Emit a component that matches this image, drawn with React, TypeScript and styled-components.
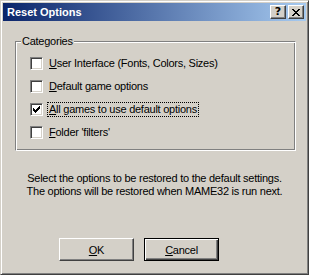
import React from 'react';
import styled, { createGlobalStyle } from 'styled-components';

const Global = createGlobalStyle`
  html, body {
    margin: 0;
    padding: 0;
    background: #d4d0c8;
  }
  body {
    font-family: "Liberation Sans", Arial, sans-serif;
    font-size: 11px;
    letter-spacing: -0.25px;
    color: #000;
  }
`;

// 窗口外框
const Window = styled.div`
  width: 309px;
  height: 275px;
  box-sizing: border-box;
  background: #d4d0c8;
  border: 1px solid;
  border-color: #d4d0c8 #404040 #404040 #d4d0c8;
  box-shadow: inset 1px 1px #fff, inset -1px -1px #808080;
  padding: 2px;
  display: flex;
  flex-direction: column;
`;

const TitleBar = styled.div`
  height: 18px;
  display: flex;
  align-items: center;
  padding: 0 2px;
  background: linear-gradient(to right, #0a246a, #a6caf0);
  color: #fff;
  font-weight: bold;
  font-size: 11px;
  letter-spacing: 0;
`;

const TitleText = styled.span`
  flex: 1;
  padding-left: 2px;
`;

const CaptionGroup = styled.div`
  display: flex;
  gap: 2px;
`;

const CaptionButton = styled.div`
  width: 16px;
  height: 14px;
  box-sizing: border-box;
  background: #d4d0c8;
  border: 1px solid;
  border-color: #fff #404040 #404040 #fff;
  box-shadow: inset -1px -1px #808080;
  display: flex;
  align-items: center;
  justify-content: center;
  color: #000;
  font-family: "DejaVu Sans", sans-serif;
  font-weight: bold;
  font-size: 11px;
  line-height: 12px;
`;

const Content = styled.div`
  flex: 1;
  display: flex;
  flex-direction: column;
  padding-top: 20px;
`;

// 分组框
const Group = styled.div`
  position: relative;
  width: 281px;
  height: 110px;
  box-sizing: border-box;
  margin-left: 12px;
  border: 1px solid;
  border-color: #808080 #fff #fff #808080;
  box-shadow: inset 1px 1px #fff, inset -1px -1px #808080;
  padding: 10px 0 0 14px;
`;

const Legend = styled.span`
  position: absolute;
  top: -8px;
  left: 5px;
  padding: 0 1px;
  background: #d4d0c8;
  line-height: 14px;
`;

const Row = styled.div`
  display: flex;
  align-items: center;
  height: 23px;
`;

const Box = styled.div`
  width: 13px;
  height: 13px;
  box-sizing: border-box;
  background: #fff;
  border: 1px solid;
  border-color: #808080 #fff #fff #808080;
  box-shadow: inset 1px 1px #404040, inset -1px -1px #d4d0c8;
  padding: 2px;
  margin-right: 4px;
  flex-shrink: 0;
`;

const Label = styled.span<{ $focus?: boolean }>`
  line-height: 13px;
  padding: 0 1px;
  border: 1px dotted ${(p) => (p.$focus ? '#000' : 'transparent')};
  white-space: nowrap;
`;

const Key = styled.span`
  text-decoration: underline;
`;

const Message = styled.div`
  margin-top: 21px;
  text-align: center;
  line-height: 13px;
`;

const ButtonRow = styled.div`
  display: flex;
  gap: 10px;
  margin-top: 40px;
  padding-left: 56px;
`;

const Button = styled.div<{ $default?: boolean }>`
  width: 75px;
  height: 23px;
  box-sizing: border-box;
  background: #d4d0c8;
  display: flex;
  align-items: center;
  justify-content: center;
  border: 1px solid;
  border-color: ${(p) => (p.$default ? '#000' : '#fff #404040 #404040 #fff')};
  box-shadow: ${(p) =>
    p.$default
      ? 'inset 1px 1px #fff, inset -1px -1px #404040, inset -2px -2px #808080'
      : 'inset -1px -1px #808080'};
`;

const Check = () => (
  <svg width="7" height="7" viewBox="0 0 7 7" shapeRendering="crispEdges" style={{ display: 'block' }}>
    <rect x="6" y="0" width="1" height="3" fill="#000" />
    <rect x="5" y="1" width="1" height="3" fill="#000" />
    <rect x="4" y="2" width="1" height="3" fill="#000" />
    <rect x="3" y="3" width="1" height="3" fill="#000" />
    <rect x="2" y="4" width="1" height="3" fill="#000" />
    <rect x="1" y="3" width="1" height="3" fill="#000" />
    <rect x="0" y="2" width="1" height="3" fill="#000" />
  </svg>
);

const CloseIcon = () => (
  <svg width="8" height="7" viewBox="0 0 8 7" shapeRendering="crispEdges" style={{ display: 'block' }}>
    <path d="M0 0h2v1H0zM6 0h2v1H6zM1 1h2v1H1zM5 1h2v1H5zM2 2h4v1H2zM3 3h2v1H3zM2 4h4v1H2zM1 5h2v1H1zM5 5h2v1H5zM0 6h2v1H0zM6 6h2v1H6z" fill="#000" />
  </svg>
);

const options = [
  { key: 'U', rest: 'ser Interface (Fonts, Colors, Sizes)', checked: false },
  { key: 'D', rest: 'efault game options', checked: false },
  { key: 'A', rest: 'll games to use default options', checked: true },
  { key: 'F', rest: "older 'filters'", checked: false },
];

function App() {
  return (
    <>
      <Global />
      <Window>
        <TitleBar>
          <TitleText>Reset Options</TitleText>
          <CaptionGroup>
            <CaptionButton>?</CaptionButton>
            <CaptionButton>
              <CloseIcon />
            </CaptionButton>
          </CaptionGroup>
        </TitleBar>
        <Content>
          <Group>
            <Legend>Categories</Legend>
            {options.map((o) => (
              <Row key={o.key}>
                <Box>{o.checked && <Check />}</Box>
                <Label $focus={o.checked}>
                  <Key>{o.key}</Key>
                  {o.rest}
                </Label>
              </Row>
            ))}
          </Group>
          <Message>
            Select the options to be restored to the default settings.
            <br />
            The options will be restored when MAME32 is run next.
          </Message>
          <ButtonRow>
            <Button>
              <span>
                <Key>O</Key>K
              </span>
            </Button>
            <Button $default>
              <span>
                <Key>C</Key>ancel
              </span>
            </Button>
          </ButtonRow>
        </Content>
      </Window>
    </>
  );
}

export default App;
